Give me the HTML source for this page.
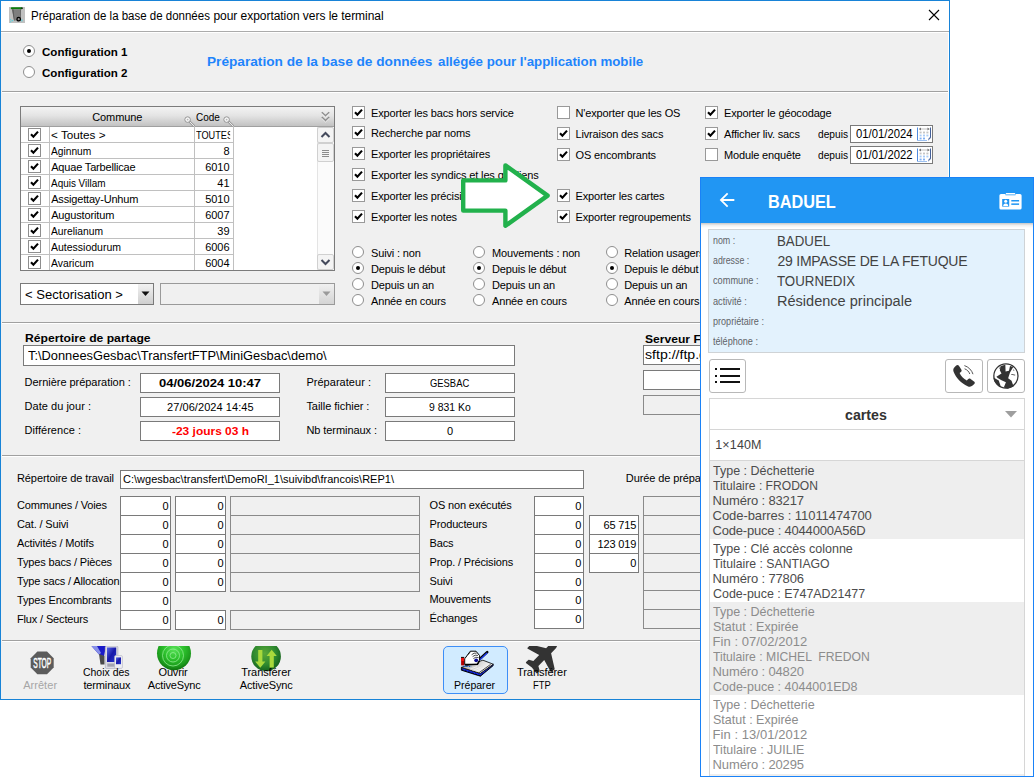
<!DOCTYPE html>
<html><head><meta charset="utf-8"><title>Préparation</title>
<style>
html,body{margin:0;padding:0;background:#fff;}
body{width:1034px;height:777px;position:relative;overflow:hidden;font-family:"Liberation Sans",sans-serif;}
.t{position:absolute;white-space:pre;}
.b{position:absolute;box-sizing:content-box;}
svg{display:block}
</style></head><body>

<div class="b" style="left:0px;top:0px;width:950px;height:700px;background:#f0f0f0;"></div>
<div class="b" style="left:0px;top:0px;width:950px;height:1px;background:#1883d7;"></div>
<div class="b" style="left:0px;top:0px;width:1px;height:700px;background:#1883d7;"></div>
<div class="b" style="left:949px;top:0px;width:1px;height:700px;background:#1883d7;"></div>
<div class="b" style="left:0px;top:699px;width:950px;height:1px;background:#1883d7;"></div>
<div class="b" style="left:1px;top:1px;width:948px;height:30px;background:#fff;"></div>
<div class="b" style="left:1px;top:31px;width:948px;height:1px;background:#ababab;"></div>
<div class="b" style="left:1px;top:32px;width:948px;height:1px;background:#fff;"></div>
<div class="b" style="left:948px;top:33px;width:1px;height:666px;background:#fff;"></div>
<svg class="b" style="left:9px;top:7px" width="16" height="16" viewBox="0 0 16 16">
<rect width="16" height="16" fill="#c0c0c0"/><rect x="1.8" y="0.3" width="11.6" height="1.9" rx="0.8" fill="#0b7d0b"/><rect x="12.4" y="0.5" width="1.3" height="1.4" fill="#111"/>
<path d="M3 2.3 L12 2.3 L11.8 13.6 L5 13.6 Z" fill="#7e7e7e"/><path d="M3 2.3 L4.6 2.3 L5.6 13.6 L5 13.6 Z" fill="#5e5e5e"/><path d="M11.2 2.3 L12 2.3 L11.8 10 L11.2 10 Z" fill="#636363"/>
<circle cx="9.7" cy="12.2" r="1.75" fill="#8a8a8a" stroke="#000" stroke-width="1.3"/>
<rect x="1" y="12.2" width="1.2" height="1" fill="#4fd4e0"/><rect x="2.6" y="13.2" width="1.6" height="1" fill="#4fd4e0"/><rect x="1" y="14.4" width="1.2" height="0.9" fill="#4fd4e0"/><rect x="12.4" y="12.4" width="1" height="2" fill="#4fd4e0"/></svg>
<div class="t " style="left:30.50px;top:6.84px;font-size:12px;line-height:18px;color:#000;transform:scaleX(0.9576);transform-origin:0 0;">Préparation de la base de données</div>
<div class="t " style="left:213.40px;top:6.84px;font-size:12px;line-height:18px;color:#000;letter-spacing:-0.037px;">pour exportation vers le terminal</div>
<svg class="b" style="left:928px;top:9px" width="12" height="12" viewBox="0 0 12 12"><path d="M1 1 L11 11 M11 1 L1 11" stroke="#000" stroke-width="1.1" fill="none"/></svg>
<div class="b" style="left:23px;top:45px;width:10px;height:10px;border-radius:50%;background:#fff;border:1px solid #8e8e8e;"></div>
<div class="b" style="left:27px;top:49px;width:4px;height:4px;border-radius:50%;background:#000;"></div>
<div class="b" style="left:23px;top:66px;width:10px;height:10px;border-radius:50%;background:#fff;border:1px solid #8e8e8e;"></div>
<div class="t " style="left:42.00px;top:43.69px;font-size:11px;line-height:16px;color:#000;font-weight:bold;transform:scaleX(1.0520);transform-origin:0 0;">Configuration 1</div>
<div class="t " style="left:42.00px;top:64.69px;font-size:11px;line-height:16px;color:#000;font-weight:bold;transform:scaleX(1.0520);transform-origin:0 0;">Configuration 2</div>
<div class="t " style="left:207.30px;top:52.00px;font-size:13px;line-height:20px;color:#1e84fc;font-weight:bold;transform:scaleX(1.0505);transform-origin:0 0;">Préparation de la base de données</div>
<div class="t " style="left:437.70px;top:52.00px;font-size:13px;line-height:20px;color:#1e84fc;font-weight:bold;transform:scaleX(1.0208);transform-origin:0 0;">allégée pour l&#x27;application mobile</div>
<div class="b" style="left:2px;top:91px;width:946px;height:1px;background:#a0a0a0;"></div>
<div class="b" style="left:2px;top:92px;width:946px;height:1px;background:#fff;"></div>
<div class="b" style="left:20px;top:106px;width:313px;height:163px;background:#fff;border:1px solid #7b7b7b;"></div>
<div class="b" style="left:21px;top:107px;width:313px;height:19px;background:linear-gradient(#f3f3f3,#e4e4e4 45%,#c2c2c2);"></div>
<div class="b" style="left:21px;top:126px;width:313px;height:1px;background:#a0a0a0;"></div>
<div class="b" style="left:21px;top:142px;width:213px;height:1px;background:#c0c0c0;"></div>
<div class="b" style="left:28px;top:128px;width:11px;height:11px;background:#fff;border:1px solid #8e8e8e;"><svg width="13" height="13" viewBox="0 0 13 13" style="position:absolute;left:-1px;top:-1px"><path d="M3 6.2 L5.4 8.8 L10 3.6" fill="none" stroke="#000" stroke-width="2.1"/></svg></div>
<div class="t " style="left:51.20px;top:127.19px;font-size:11px;line-height:16px;color:#000;transform:scaleX(1.0651);transform-origin:0 0;">&lt; Toutes &gt;</div>
<div class="t " style="left:196.20px;top:127.19px;font-size:11px;line-height:16px;color:#000;transform:scaleX(0.8334);transform-origin:0 0;width:40.56px;overflow:hidden;">TOUTES</div>
<div class="b" style="left:21px;top:158px;width:213px;height:1px;background:#c0c0c0;"></div>
<div class="b" style="left:28px;top:144px;width:11px;height:11px;background:#fff;border:1px solid #8e8e8e;"><svg width="13" height="13" viewBox="0 0 13 13" style="position:absolute;left:-1px;top:-1px"><path d="M3 6.2 L5.4 8.8 L10 3.6" fill="none" stroke="#000" stroke-width="2.1"/></svg></div>
<div class="t " style="left:51.20px;top:143.19px;font-size:11px;line-height:16px;color:#000;transform:scaleX(0.9282);transform-origin:0 0;">Aginnum</div>
<div class="t " style="left:223.38px;top:143.19px;font-size:11px;line-height:16px;color:#000;letter-spacing:-0.100px;">8</div>
<div class="b" style="left:21px;top:174px;width:213px;height:1px;background:#c0c0c0;"></div>
<div class="b" style="left:28px;top:160px;width:11px;height:11px;background:#fff;border:1px solid #8e8e8e;"><svg width="13" height="13" viewBox="0 0 13 13" style="position:absolute;left:-1px;top:-1px"><path d="M3 6.2 L5.4 8.8 L10 3.6" fill="none" stroke="#000" stroke-width="2.1"/></svg></div>
<div class="t " style="left:51.20px;top:159.19px;font-size:11px;line-height:16px;color:#000;letter-spacing:-0.174px;">Aquae Tarbellicae</div>
<div class="t " style="left:205.33px;top:159.19px;font-size:11px;line-height:16px;color:#000;letter-spacing:-0.100px;">6010</div>
<div class="b" style="left:21px;top:190px;width:213px;height:1px;background:#c0c0c0;"></div>
<div class="b" style="left:28px;top:176px;width:11px;height:11px;background:#fff;border:1px solid #8e8e8e;"><svg width="13" height="13" viewBox="0 0 13 13" style="position:absolute;left:-1px;top:-1px"><path d="M3 6.2 L5.4 8.8 L10 3.6" fill="none" stroke="#000" stroke-width="2.1"/></svg></div>
<div class="t " style="left:51.20px;top:175.19px;font-size:11px;line-height:16px;color:#000;transform:scaleX(0.9034);transform-origin:0 0;">Aquis Villam</div>
<div class="t " style="left:217.36px;top:175.19px;font-size:11px;line-height:16px;color:#000;letter-spacing:-0.100px;">41</div>
<div class="b" style="left:21px;top:206px;width:213px;height:1px;background:#c0c0c0;"></div>
<div class="b" style="left:28px;top:192px;width:11px;height:11px;background:#fff;border:1px solid #8e8e8e;"><svg width="13" height="13" viewBox="0 0 13 13" style="position:absolute;left:-1px;top:-1px"><path d="M3 6.2 L5.4 8.8 L10 3.6" fill="none" stroke="#000" stroke-width="2.1"/></svg></div>
<div class="t " style="left:51.20px;top:191.19px;font-size:11px;line-height:16px;color:#000;letter-spacing:-0.179px;">Assigettay-Unhum</div>
<div class="t " style="left:205.33px;top:191.19px;font-size:11px;line-height:16px;color:#000;letter-spacing:-0.100px;">5010</div>
<div class="b" style="left:21px;top:222px;width:213px;height:1px;background:#c0c0c0;"></div>
<div class="b" style="left:28px;top:208px;width:11px;height:11px;background:#fff;border:1px solid #8e8e8e;"><svg width="13" height="13" viewBox="0 0 13 13" style="position:absolute;left:-1px;top:-1px"><path d="M3 6.2 L5.4 8.8 L10 3.6" fill="none" stroke="#000" stroke-width="2.1"/></svg></div>
<div class="t " style="left:51.20px;top:207.19px;font-size:11px;line-height:16px;color:#000;letter-spacing:-0.151px;">Augustoritum</div>
<div class="t " style="left:205.33px;top:207.19px;font-size:11px;line-height:16px;color:#000;letter-spacing:-0.100px;">6007</div>
<div class="b" style="left:21px;top:238px;width:213px;height:1px;background:#c0c0c0;"></div>
<div class="b" style="left:28px;top:224px;width:11px;height:11px;background:#fff;border:1px solid #8e8e8e;"><svg width="13" height="13" viewBox="0 0 13 13" style="position:absolute;left:-1px;top:-1px"><path d="M3 6.2 L5.4 8.8 L10 3.6" fill="none" stroke="#000" stroke-width="2.1"/></svg></div>
<div class="t " style="left:51.20px;top:223.19px;font-size:11px;line-height:16px;color:#000;transform:scaleX(0.9345);transform-origin:0 0;">Aurelianum</div>
<div class="t " style="left:217.36px;top:223.19px;font-size:11px;line-height:16px;color:#000;letter-spacing:-0.100px;">39</div>
<div class="b" style="left:21px;top:254px;width:213px;height:1px;background:#c0c0c0;"></div>
<div class="b" style="left:28px;top:240px;width:11px;height:11px;background:#fff;border:1px solid #8e8e8e;"><svg width="13" height="13" viewBox="0 0 13 13" style="position:absolute;left:-1px;top:-1px"><path d="M3 6.2 L5.4 8.8 L10 3.6" fill="none" stroke="#000" stroke-width="2.1"/></svg></div>
<div class="t " style="left:51.20px;top:239.19px;font-size:11px;line-height:16px;color:#000;transform:scaleX(0.9540);transform-origin:0 0;">Autessiodurum</div>
<div class="t " style="left:205.33px;top:239.19px;font-size:11px;line-height:16px;color:#000;letter-spacing:-0.100px;">6006</div>
<div class="b" style="left:28px;top:256px;width:11px;height:11px;background:#fff;border:1px solid #8e8e8e;"><svg width="13" height="13" viewBox="0 0 13 13" style="position:absolute;left:-1px;top:-1px"><path d="M3 6.2 L5.4 8.8 L10 3.6" fill="none" stroke="#000" stroke-width="2.1"/></svg></div>
<div class="t " style="left:51.20px;top:255.19px;font-size:11px;line-height:16px;color:#000;transform:scaleX(0.9420);transform-origin:0 0;">Avaricum</div>
<div class="t " style="left:205.33px;top:255.19px;font-size:11px;line-height:16px;color:#000;letter-spacing:-0.100px;">6004</div>
<div class="b" style="left:49px;top:127px;width:1px;height:143px;background:#c0c0c0;"></div>
<div class="b" style="left:194px;top:127px;width:1px;height:143px;background:#c0c0c0;"></div>
<div class="b" style="left:233px;top:127px;width:1px;height:143px;background:#c0c0c0;"></div>
<div class="t " style="left:92.23px;top:108.69px;font-size:11px;line-height:16px;color:#000;letter-spacing:-0.100px;">Commune</div>
<div class="t " style="left:195.70px;top:108.69px;font-size:11px;line-height:16px;color:#000;transform:scaleX(0.9088);transform-origin:0 0;">Code</div>
<svg class="b" style="left:184px;top:116px" width="11" height="11" viewBox="0 0 11 11"><path d="M5.6 5.6 L10.2 10.2" stroke="#9c9c9c" stroke-width="2.4" stroke-linecap="round"/><path d="M5.6 5.6 L10.2 10.2" stroke="#ececec" stroke-width="1" stroke-linecap="round"/><circle cx="3.6" cy="3.6" r="2.8" fill="#f6f6f6" stroke="#959595" stroke-width="1"/><circle cx="3.6" cy="3.6" r="0.9" fill="#b4b4b4"/></svg>
<svg class="b" style="left:223px;top:116px" width="11" height="11" viewBox="0 0 11 11"><path d="M5.6 5.6 L10.2 10.2" stroke="#9c9c9c" stroke-width="2.4" stroke-linecap="round"/><path d="M5.6 5.6 L10.2 10.2" stroke="#ececec" stroke-width="1" stroke-linecap="round"/><circle cx="3.6" cy="3.6" r="2.8" fill="#f6f6f6" stroke="#959595" stroke-width="1"/><circle cx="3.6" cy="3.6" r="0.9" fill="#b4b4b4"/></svg>
<svg class="b" style="left:321px;top:111px" width="9" height="12" viewBox="0 0 9 12"><path d="M0.8 1.2 L4.5 4.8 L8.2 1.2 M0.8 6 L4.5 9.6 L8.2 6" stroke="#8c8c8c" stroke-width="1.5" fill="none"/><path d="M0.8 2.6 L4.5 6.2 L8.2 2.6 M0.8 7.4 L4.5 11 L8.2 7.4" stroke="#f4f4f4" stroke-width="0.8" fill="none"/></svg>
<div class="b" style="left:317px;top:127px;width:17px;height:143px;background:#fbfbfb;"></div>
<div class="b" style="left:317px;top:127px;width:1px;height:143px;background:#e4e4e4;"></div>
<div class="b" style="left:317px;top:127px;width:15px;height:14px;background:#f4f4f4;border:1px solid #d0d0d0;border-radius:2px;"></div>
<div class="b" style="left:317px;top:143px;width:15px;height:17px;background:#f4f4f4;border:1px solid #d0d0d0;border-radius:2px;"></div>
<div class="b" style="left:317px;top:254px;width:15px;height:14px;background:#f4f4f4;border:1px solid #d0d0d0;border-radius:2px;"></div>
<svg class="b" style="left:320px;top:131px" width="11" height="8" viewBox="0 0 11 8"><path d="M1.5 6 L5.5 2 L9.5 6" stroke="#444a5c" stroke-width="2" fill="none"/></svg>
<svg class="b" style="left:320px;top:258px" width="11" height="8" viewBox="0 0 11 8"><path d="M1.5 2 L5.5 6 L9.5 2" stroke="#444a5c" stroke-width="2" fill="none"/></svg>
<div class="b" style="left:322px;top:150px;width:7px;height:1px;background:#8c8c8c;"></div>
<div class="b" style="left:322px;top:152px;width:7px;height:1px;background:#8c8c8c;"></div>
<div class="b" style="left:322px;top:154px;width:7px;height:1px;background:#8c8c8c;"></div>
<div class="b" style="left:322px;top:156px;width:7px;height:1px;background:#8c8c8c;"></div>
<div class="b" style="left:20px;top:283px;width:132px;height:20px;background:#fff;border:1px solid #7a7a7a;"></div>
<div class="b" style="left:138px;top:284px;width:15px;height:20px;background:linear-gradient(#f2f2f2,#cfcfcf);"></div>
<svg class="b" style="left:141px;top:291px" width="9" height="6" viewBox="0 0 9 6"><path d="M0.5 0.5 L8.5 0.5 L4.5 5 Z" fill="#111"/></svg>
<div class="t " style="left:25.00px;top:285.84px;font-size:12px;line-height:18px;color:#000;transform:scaleX(1.0882);transform-origin:0 0;">&lt; Sectorisation &gt;</div>
<div class="b" style="left:160px;top:283px;width:173px;height:20px;background:#f0f0f0;border:1px solid #9a9a9a;"></div>
<div class="b" style="left:319px;top:284px;width:15px;height:20px;background:linear-gradient(#f0f0f0,#d4d4d4);"></div>
<svg class="b" style="left:322px;top:291px" width="9" height="6" viewBox="0 0 9 6"><path d="M0.5 0.5 L8.5 0.5 L4.5 5 Z" fill="#9a9a9a"/></svg>
<div class="b" style="left:352px;top:106px;width:11px;height:11px;background:#fff;border:1px solid #999;"><svg width="13" height="13" viewBox="0 0 13 13" style="position:absolute;left:-1px;top:-1px"><path d="M3 6.2 L5.4 8.8 L10 3.6" fill="none" stroke="#000" stroke-width="2.1"/></svg></div>
<div class="t " style="left:371.00px;top:105.19px;font-size:11px;line-height:16px;color:#000;letter-spacing:-0.150px;">Exporter les bacs hors service</div>
<div class="b" style="left:352px;top:126px;width:11px;height:11px;background:#fff;border:1px solid #999;"><svg width="13" height="13" viewBox="0 0 13 13" style="position:absolute;left:-1px;top:-1px"><path d="M3 6.2 L5.4 8.8 L10 3.6" fill="none" stroke="#000" stroke-width="2.1"/></svg></div>
<div class="t " style="left:371.00px;top:125.19px;font-size:11px;line-height:16px;color:#000;letter-spacing:-0.150px;">Recherche par noms</div>
<div class="b" style="left:352px;top:147px;width:11px;height:11px;background:#fff;border:1px solid #999;"><svg width="13" height="13" viewBox="0 0 13 13" style="position:absolute;left:-1px;top:-1px"><path d="M3 6.2 L5.4 8.8 L10 3.6" fill="none" stroke="#000" stroke-width="2.1"/></svg></div>
<div class="t " style="left:371.00px;top:146.19px;font-size:11px;line-height:16px;color:#000;letter-spacing:-0.150px;">Exporter les propriétaires</div>
<div class="b" style="left:352px;top:168px;width:11px;height:11px;background:#fff;border:1px solid #999;"><svg width="13" height="13" viewBox="0 0 13 13" style="position:absolute;left:-1px;top:-1px"><path d="M3 6.2 L5.4 8.8 L10 3.6" fill="none" stroke="#000" stroke-width="2.1"/></svg></div>
<div class="t " style="left:371.00px;top:167.19px;font-size:11px;line-height:16px;color:#000;letter-spacing:-0.150px;">Exporter les syndics et les gardiens</div>
<div class="b" style="left:352px;top:189px;width:11px;height:11px;background:#fff;border:1px solid #999;"><svg width="13" height="13" viewBox="0 0 13 13" style="position:absolute;left:-1px;top:-1px"><path d="M3 6.2 L5.4 8.8 L10 3.6" fill="none" stroke="#000" stroke-width="2.1"/></svg></div>
<div class="t " style="left:371.00px;top:188.19px;font-size:11px;line-height:16px;color:#000;letter-spacing:-0.150px;">Exporter les précisions</div>
<div class="b" style="left:352px;top:210px;width:11px;height:11px;background:#fff;border:1px solid #999;"><svg width="13" height="13" viewBox="0 0 13 13" style="position:absolute;left:-1px;top:-1px"><path d="M3 6.2 L5.4 8.8 L10 3.6" fill="none" stroke="#000" stroke-width="2.1"/></svg></div>
<div class="t " style="left:371.00px;top:209.19px;font-size:11px;line-height:16px;color:#000;letter-spacing:-0.150px;">Exporter les notes</div>
<div class="b" style="left:557px;top:106px;width:11px;height:11px;background:#fff;border:1px solid #999;"></div>
<div class="t " style="left:575.50px;top:105.19px;font-size:11px;line-height:16px;color:#000;letter-spacing:-0.150px;">N&#x27;exporter que les OS</div>
<div class="b" style="left:557px;top:127px;width:11px;height:11px;background:#fff;border:1px solid #999;"><svg width="13" height="13" viewBox="0 0 13 13" style="position:absolute;left:-1px;top:-1px"><path d="M3 6.2 L5.4 8.8 L10 3.6" fill="none" stroke="#000" stroke-width="2.1"/></svg></div>
<div class="t " style="left:575.50px;top:126.19px;font-size:11px;line-height:16px;color:#000;letter-spacing:-0.150px;">Livraison des sacs</div>
<div class="b" style="left:557px;top:148px;width:11px;height:11px;background:#fff;border:1px solid #999;"><svg width="13" height="13" viewBox="0 0 13 13" style="position:absolute;left:-1px;top:-1px"><path d="M3 6.2 L5.4 8.8 L10 3.6" fill="none" stroke="#000" stroke-width="2.1"/></svg></div>
<div class="t " style="left:575.50px;top:147.19px;font-size:11px;line-height:16px;color:#000;letter-spacing:-0.150px;">OS encombrants</div>
<div class="b" style="left:557px;top:189px;width:11px;height:11px;background:#fff;border:1px solid #999;"><svg width="13" height="13" viewBox="0 0 13 13" style="position:absolute;left:-1px;top:-1px"><path d="M3 6.2 L5.4 8.8 L10 3.6" fill="none" stroke="#000" stroke-width="2.1"/></svg></div>
<div class="t " style="left:575.50px;top:188.19px;font-size:11px;line-height:16px;color:#000;letter-spacing:-0.150px;">Exporter les cartes</div>
<div class="b" style="left:557px;top:210px;width:11px;height:11px;background:#fff;border:1px solid #999;"><svg width="13" height="13" viewBox="0 0 13 13" style="position:absolute;left:-1px;top:-1px"><path d="M3 6.2 L5.4 8.8 L10 3.6" fill="none" stroke="#000" stroke-width="2.1"/></svg></div>
<div class="t " style="left:575.50px;top:209.19px;font-size:11px;line-height:16px;color:#000;letter-spacing:-0.150px;">Exporter regroupements</div>
<div class="b" style="left:705px;top:106px;width:11px;height:11px;background:#fff;border:1px solid #999;"><svg width="13" height="13" viewBox="0 0 13 13" style="position:absolute;left:-1px;top:-1px"><path d="M3 6.2 L5.4 8.8 L10 3.6" fill="none" stroke="#000" stroke-width="2.1"/></svg></div>
<div class="t " style="left:724.00px;top:105.19px;font-size:11px;line-height:16px;color:#000;letter-spacing:-0.150px;">Exporter le géocodage</div>
<div class="b" style="left:705px;top:127px;width:11px;height:11px;background:#fff;border:1px solid #999;"><svg width="13" height="13" viewBox="0 0 13 13" style="position:absolute;left:-1px;top:-1px"><path d="M3 6.2 L5.4 8.8 L10 3.6" fill="none" stroke="#000" stroke-width="2.1"/></svg></div>
<div class="t " style="left:724.00px;top:126.19px;font-size:11px;line-height:16px;color:#000;letter-spacing:-0.150px;">Afficher liv. sacs</div>
<div class="b" style="left:705px;top:148px;width:11px;height:11px;background:#fff;border:1px solid #999;"></div>
<div class="t " style="left:724.00px;top:147.19px;font-size:11px;line-height:16px;color:#000;letter-spacing:-0.150px;">Module enquête</div>
<div class="t " style="left:818.00px;top:126.19px;font-size:11px;line-height:16px;color:#000;transform:scaleX(0.9255);transform-origin:0 0;">depuis</div>
<div class="t " style="left:818.00px;top:147.19px;font-size:11px;line-height:16px;color:#000;transform:scaleX(0.9255);transform-origin:0 0;">depuis</div>
<div class="b" style="left:850px;top:125px;width:81px;height:16px;background:#fff;border:1px solid #7a7a7a;"></div>
<div class="b" style="left:850px;top:146px;width:81px;height:16px;background:#fff;border:1px solid #7a7a7a;"></div>
<div class="t " style="left:855.50px;top:125.34px;font-size:12px;line-height:18px;color:#000;transform:scaleX(0.9407);transform-origin:0 0;">01/01/2024</div>
<div class="t " style="left:855.50px;top:146.34px;font-size:12px;line-height:18px;color:#000;transform:scaleX(0.9407);transform-origin:0 0;">01/01/2022</div>
<svg class="b" style="left:917px;top:127px" width="15" height="15" viewBox="0 0 15 15"><path d="M0.5 0.5 V13.5" stroke="#4f8be0" stroke-width="1"/><path d="M0.5 13.5 H10" stroke="#9cc0f0" stroke-width="1"/><path d="M13.9 9 V11 L11 13.8 L11.6 11.4 Z" fill="#5570a8"/><path d="M13.5 0.5 V10.5" stroke="#44609a" stroke-width="1"/><path d="M2 2 H12.5" stroke="#b0b0b0" stroke-width="0.8"/><path d="M2 2 L4 0.6 V3.4 Z M12.5 2 L10.5 0.6 V3.4 Z" fill="#707070"/><g fill="#c4c4c4"><rect x="2.6" y="4.6" width="2" height="1.8"/><rect x="6" y="4.6" width="2" height="1.8"/><rect x="9.4" y="4.6" width="2" height="1.8"/></g><g fill="#a9cbf5"><rect x="2.6" y="7.6" width="2" height="1.8"/><rect x="6" y="7.6" width="2" height="1.8"/><rect x="9.4" y="7.6" width="2" height="1.8"/></g><g fill="#7fb0f5"><rect x="2.6" y="10.6" width="2" height="1.8"/><rect x="6" y="10.6" width="2" height="1.8"/></g></svg>
<svg class="b" style="left:917px;top:148px" width="15" height="15" viewBox="0 0 15 15"><path d="M0.5 0.5 V13.5" stroke="#4f8be0" stroke-width="1"/><path d="M0.5 13.5 H10" stroke="#9cc0f0" stroke-width="1"/><path d="M13.9 9 V11 L11 13.8 L11.6 11.4 Z" fill="#5570a8"/><path d="M13.5 0.5 V10.5" stroke="#44609a" stroke-width="1"/><path d="M2 2 H12.5" stroke="#b0b0b0" stroke-width="0.8"/><path d="M2 2 L4 0.6 V3.4 Z M12.5 2 L10.5 0.6 V3.4 Z" fill="#707070"/><g fill="#c4c4c4"><rect x="2.6" y="4.6" width="2" height="1.8"/><rect x="6" y="4.6" width="2" height="1.8"/><rect x="9.4" y="4.6" width="2" height="1.8"/></g><g fill="#a9cbf5"><rect x="2.6" y="7.6" width="2" height="1.8"/><rect x="6" y="7.6" width="2" height="1.8"/><rect x="9.4" y="7.6" width="2" height="1.8"/></g><g fill="#7fb0f5"><rect x="2.6" y="10.6" width="2" height="1.8"/><rect x="6" y="10.6" width="2" height="1.8"/></g></svg>
<div class="b" style="left:352px;top:246px;width:10px;height:10px;border-radius:50%;background:#fff;border:1px solid #8e8e8e;"></div>
<div class="t " style="left:371.00px;top:245.19px;font-size:11px;line-height:16px;color:#000;letter-spacing:-0.150px;">Suivi : non</div>
<div class="b" style="left:352px;top:262px;width:10px;height:10px;border-radius:50%;background:#fff;border:1px solid #8e8e8e;"></div>
<div class="b" style="left:356px;top:266px;width:4px;height:4px;border-radius:50%;background:#000;"></div>
<div class="t " style="left:371.00px;top:261.19px;font-size:11px;line-height:16px;color:#000;letter-spacing:-0.150px;">Depuis le début</div>
<div class="b" style="left:352px;top:278px;width:10px;height:10px;border-radius:50%;background:#fff;border:1px solid #8e8e8e;"></div>
<div class="t " style="left:371.00px;top:277.19px;font-size:11px;line-height:16px;color:#000;letter-spacing:-0.150px;">Depuis un an</div>
<div class="b" style="left:352px;top:294px;width:10px;height:10px;border-radius:50%;background:#fff;border:1px solid #8e8e8e;"></div>
<div class="t " style="left:371.00px;top:293.19px;font-size:11px;line-height:16px;color:#000;letter-spacing:-0.150px;">Année en cours</div>
<div class="b" style="left:473px;top:246px;width:10px;height:10px;border-radius:50%;background:#fff;border:1px solid #8e8e8e;"></div>
<div class="t " style="left:492.00px;top:245.19px;font-size:11px;line-height:16px;color:#000;letter-spacing:-0.150px;">Mouvements : non</div>
<div class="b" style="left:473px;top:262px;width:10px;height:10px;border-radius:50%;background:#fff;border:1px solid #8e8e8e;"></div>
<div class="b" style="left:477px;top:266px;width:4px;height:4px;border-radius:50%;background:#000;"></div>
<div class="t " style="left:492.00px;top:261.19px;font-size:11px;line-height:16px;color:#000;letter-spacing:-0.150px;">Depuis le début</div>
<div class="b" style="left:473px;top:278px;width:10px;height:10px;border-radius:50%;background:#fff;border:1px solid #8e8e8e;"></div>
<div class="t " style="left:492.00px;top:277.19px;font-size:11px;line-height:16px;color:#000;letter-spacing:-0.150px;">Depuis un an</div>
<div class="b" style="left:473px;top:294px;width:10px;height:10px;border-radius:50%;background:#fff;border:1px solid #8e8e8e;"></div>
<div class="t " style="left:492.00px;top:293.19px;font-size:11px;line-height:16px;color:#000;letter-spacing:-0.150px;">Année en cours</div>
<div class="b" style="left:606px;top:246px;width:10px;height:10px;border-radius:50%;background:#fff;border:1px solid #8e8e8e;"></div>
<div class="t " style="left:624.30px;top:245.19px;font-size:11px;line-height:16px;color:#000;letter-spacing:-0.150px;">Relation usagers</div>
<div class="b" style="left:606px;top:262px;width:10px;height:10px;border-radius:50%;background:#fff;border:1px solid #8e8e8e;"></div>
<div class="b" style="left:610px;top:266px;width:4px;height:4px;border-radius:50%;background:#000;"></div>
<div class="t " style="left:624.30px;top:261.19px;font-size:11px;line-height:16px;color:#000;letter-spacing:-0.150px;">Depuis le début</div>
<div class="b" style="left:606px;top:278px;width:10px;height:10px;border-radius:50%;background:#fff;border:1px solid #8e8e8e;"></div>
<div class="t " style="left:624.30px;top:277.19px;font-size:11px;line-height:16px;color:#000;letter-spacing:-0.150px;">Depuis un an</div>
<div class="b" style="left:606px;top:294px;width:10px;height:10px;border-radius:50%;background:#fff;border:1px solid #8e8e8e;"></div>
<div class="t " style="left:624.30px;top:293.19px;font-size:11px;line-height:16px;color:#000;letter-spacing:-0.150px;">Année en cours</div>
<svg class="b" style="left:455px;top:158px" width="100" height="76" viewBox="455 158 100 76"><path d="M463.2 180.4 L505.4 180.4 L505.4 165.4 L547.6 195.6 L505.4 225.8 L505.4 210.6 L463.2 210.6 Z" fill="#fff" stroke="#22b14c" stroke-width="4.4" stroke-linejoin="round"/></svg>
<div class="b" style="left:2px;top:322px;width:946px;height:1px;background:#a0a0a0;"></div>
<div class="b" style="left:2px;top:323px;width:946px;height:1px;background:#fff;"></div>
<div class="t " style="left:25.40px;top:330.39px;font-size:11px;line-height:16px;color:#000;font-weight:bold;transform:scaleX(1.1046);transform-origin:0 0;">Répertoire de partage</div>
<div class="b" style="left:23px;top:345px;width:490px;height:19px;background:#fff;border:1px solid #7a7a7a;"></div>
<div class="t " style="left:27.70px;top:346.64px;font-size:12px;line-height:18px;color:#000;transform:scaleX(1.0702);transform-origin:0 0;">T:\DonneesGesbac\TransfertFTP\MiniGesbac\demo\</div>
<div class="t " style="left:24.60px;top:374.19px;font-size:11px;line-height:16px;color:#000;letter-spacing:-0.037px;">Dernière préparation :</div>
<div class="t " style="left:24.60px;top:398.19px;font-size:11px;line-height:16px;color:#000;letter-spacing:0.026px;">Date du jour :</div>
<div class="t " style="left:24.60px;top:421.99px;font-size:11px;line-height:16px;color:#000;letter-spacing:0.029px;">Différence :</div>
<div class="b" style="left:140px;top:373px;width:138px;height:18px;background:#fff;border:1px solid #7a7a7a;"></div>
<div class="b" style="left:140px;top:397px;width:138px;height:18px;background:#fff;border:1px solid #7a7a7a;"></div>
<div class="b" style="left:140px;top:421px;width:138px;height:18px;background:#fff;border:1px solid #7a7a7a;"></div>
<div class="t " style="left:159.00px;top:375.19px;font-size:11px;line-height:16px;color:#000;font-weight:bold;transform:scaleX(1.1827);transform-origin:0 0;">04/06/2024 10:47</div>
<div class="t " style="left:167.08px;top:399.19px;font-size:11px;line-height:16px;color:#000;letter-spacing:0.054px;">27/06/2024 14:45</div>
<div class="t " style="left:171.50px;top:423.19px;font-size:11px;line-height:16px;color:#ff0000;font-weight:bold;transform:scaleX(1.0858);transform-origin:0 0;">-23 jours 03 h</div>
<div class="t " style="left:306.40px;top:374.19px;font-size:11px;line-height:16px;color:#000;letter-spacing:0.031px;">Préparateur :</div>
<div class="t " style="left:306.40px;top:398.19px;font-size:11px;line-height:16px;color:#000;letter-spacing:-0.036px;">Taille fichier :</div>
<div class="t " style="left:306.40px;top:421.99px;font-size:11px;line-height:16px;color:#000;letter-spacing:-0.066px;">Nb terminaux :</div>
<div class="b" style="left:385px;top:373px;width:128px;height:18px;background:#fff;border:1px solid #7a7a7a;"></div>
<div class="b" style="left:385px;top:397px;width:128px;height:18px;background:#fff;border:1px solid #7a7a7a;"></div>
<div class="b" style="left:385px;top:421px;width:128px;height:18px;background:#fff;border:1px solid #7a7a7a;"></div>
<div class="t " style="left:430.20px;top:375.19px;font-size:11px;line-height:16px;color:#000;transform:scaleX(0.8550);transform-origin:0 0;">GESBAC</div>
<div class="t " style="left:428.55px;top:399.19px;font-size:11px;line-height:16px;color:#000;transform:scaleX(0.9469);transform-origin:0 0;">9 831 Ko</div>
<div class="t " style="left:446.94px;top:423.19px;font-size:11px;line-height:16px;color:#000;">0</div>
<div class="t " style="left:645.20px;top:330.79px;font-size:11px;line-height:16px;color:#000;font-weight:bold;transform:scaleX(1.1000);transform-origin:0 0;">Serveur FTP</div>
<div class="b" style="left:643px;top:345px;width:298px;height:18px;background:#fff;border:1px solid #7a7a7a;"></div>
<div class="t " style="left:645.40px;top:346.24px;font-size:12px;line-height:18px;color:#000;transform:scaleX(1.1756);transform-origin:0 0;">sftp://ftp.gesbac.fr</div>
<div class="b" style="left:643px;top:370px;width:298px;height:18px;background:#fff;border:1px solid #7a7a7a;"></div>
<div class="b" style="left:643px;top:395px;width:298px;height:18px;background:#f0f0f0;border:1px solid #8a8a8a;"></div>
<div class="b" style="left:2px;top:455px;width:946px;height:1px;background:#a0a0a0;"></div>
<div class="b" style="left:2px;top:456px;width:946px;height:1px;background:#fff;"></div>
<div class="t " style="left:17.00px;top:470.19px;font-size:11px;line-height:16px;color:#000;letter-spacing:-0.100px;">Répertoire de travail</div>
<div class="b" style="left:120px;top:470px;width:462px;height:17px;background:#fff;border:1px solid #7a7a7a;"></div>
<div class="t " style="left:123.00px;top:471.39px;font-size:11px;line-height:16px;color:#000;letter-spacing:0.015px;">C:\wgesbac\transfert\DemoRI_1\suivibd\francois\REP1\</div>
<div class="t " style="left:625.80px;top:470.39px;font-size:11px;line-height:16px;color:#000;letter-spacing:-0.100px;">Durée de préparation</div>
<div class="t " style="left:17.00px;top:497.19px;font-size:11px;line-height:16px;color:#000;letter-spacing:-0.150px;">Communes / Voies</div>
<div class="t " style="left:17.00px;top:516.19px;font-size:11px;line-height:16px;color:#000;letter-spacing:-0.150px;">Cat. / Suivi</div>
<div class="t " style="left:17.00px;top:535.19px;font-size:11px;line-height:16px;color:#000;letter-spacing:-0.150px;">Activités / Motifs</div>
<div class="t " style="left:17.00px;top:554.19px;font-size:11px;line-height:16px;color:#000;letter-spacing:-0.150px;">Types bacs / Pièces</div>
<div class="t " style="left:17.00px;top:573.19px;font-size:11px;line-height:16px;color:#000;letter-spacing:-0.150px;">Type sacs / Allocation</div>
<div class="t " style="left:17.00px;top:592.19px;font-size:11px;line-height:16px;color:#000;letter-spacing:-0.150px;">Types Encombrants</div>
<div class="t " style="left:17.00px;top:611.19px;font-size:11px;line-height:16px;color:#000;letter-spacing:-0.150px;">Flux / Secteurs</div>
<div class="b" style="left:120px;top:496px;width:49px;height:18px;background:#fff;border:1px solid #7a7a7a;"></div>
<div class="t " style="left:162.48px;top:498.19px;font-size:11px;line-height:16px;color:#000;">0</div>
<div class="b" style="left:175px;top:496px;width:49px;height:18px;background:#fff;border:1px solid #7a7a7a;"></div>
<div class="t " style="left:217.48px;top:498.19px;font-size:11px;line-height:16px;color:#000;">0</div>
<div class="b" style="left:230px;top:496px;width:188px;height:18px;background:#f0f0f0;border:1px solid #8a8a8a;"></div>
<div class="b" style="left:120px;top:515px;width:49px;height:18px;background:#fff;border:1px solid #7a7a7a;"></div>
<div class="t " style="left:162.48px;top:517.19px;font-size:11px;line-height:16px;color:#000;">0</div>
<div class="b" style="left:175px;top:515px;width:49px;height:18px;background:#fff;border:1px solid #7a7a7a;"></div>
<div class="t " style="left:217.48px;top:517.19px;font-size:11px;line-height:16px;color:#000;">0</div>
<div class="b" style="left:230px;top:515px;width:188px;height:18px;background:#f0f0f0;border:1px solid #8a8a8a;"></div>
<div class="b" style="left:120px;top:534px;width:49px;height:18px;background:#fff;border:1px solid #7a7a7a;"></div>
<div class="t " style="left:162.48px;top:536.19px;font-size:11px;line-height:16px;color:#000;">0</div>
<div class="b" style="left:175px;top:534px;width:49px;height:18px;background:#fff;border:1px solid #7a7a7a;"></div>
<div class="t " style="left:217.48px;top:536.19px;font-size:11px;line-height:16px;color:#000;">0</div>
<div class="b" style="left:230px;top:534px;width:188px;height:18px;background:#f0f0f0;border:1px solid #8a8a8a;"></div>
<div class="b" style="left:120px;top:553px;width:49px;height:18px;background:#fff;border:1px solid #7a7a7a;"></div>
<div class="t " style="left:162.48px;top:555.19px;font-size:11px;line-height:16px;color:#000;">0</div>
<div class="b" style="left:175px;top:553px;width:49px;height:18px;background:#fff;border:1px solid #7a7a7a;"></div>
<div class="t " style="left:217.48px;top:555.19px;font-size:11px;line-height:16px;color:#000;">0</div>
<div class="b" style="left:230px;top:553px;width:188px;height:18px;background:#f0f0f0;border:1px solid #8a8a8a;"></div>
<div class="b" style="left:120px;top:572px;width:49px;height:18px;background:#fff;border:1px solid #7a7a7a;"></div>
<div class="t " style="left:162.48px;top:574.19px;font-size:11px;line-height:16px;color:#000;">0</div>
<div class="b" style="left:175px;top:572px;width:49px;height:18px;background:#fff;border:1px solid #7a7a7a;"></div>
<div class="t " style="left:217.48px;top:574.19px;font-size:11px;line-height:16px;color:#000;">0</div>
<div class="b" style="left:230px;top:572px;width:188px;height:18px;background:#f0f0f0;border:1px solid #8a8a8a;"></div>
<div class="b" style="left:120px;top:591px;width:49px;height:18px;background:#fff;border:1px solid #7a7a7a;"></div>
<div class="t " style="left:162.48px;top:593.19px;font-size:11px;line-height:16px;color:#000;">0</div>
<div class="b" style="left:120px;top:610px;width:49px;height:18px;background:#fff;border:1px solid #7a7a7a;"></div>
<div class="t " style="left:162.48px;top:612.19px;font-size:11px;line-height:16px;color:#000;">0</div>
<div class="b" style="left:175px;top:610px;width:49px;height:18px;background:#fff;border:1px solid #7a7a7a;"></div>
<div class="t " style="left:217.48px;top:612.19px;font-size:11px;line-height:16px;color:#000;">0</div>
<div class="b" style="left:230px;top:610px;width:188px;height:18px;background:#f0f0f0;border:1px solid #8a8a8a;"></div>
<div class="t " style="left:429.50px;top:497.19px;font-size:11px;line-height:16px;color:#000;letter-spacing:-0.150px;">OS non exécutés</div>
<div class="b" style="left:534px;top:496px;width:48px;height:18px;background:#fff;border:1px solid #7a7a7a;"></div>
<div class="t " style="left:575.28px;top:498.19px;font-size:11px;line-height:16px;color:#000;">0</div>
<div class="b" style="left:643px;top:496px;width:298px;height:18px;background:#f0f0f0;border:1px solid #8a8a8a;"></div>
<div class="t " style="left:429.50px;top:516.19px;font-size:11px;line-height:16px;color:#000;letter-spacing:-0.150px;">Producteurs</div>
<div class="b" style="left:534px;top:515px;width:48px;height:18px;background:#fff;border:1px solid #7a7a7a;"></div>
<div class="t " style="left:575.28px;top:517.19px;font-size:11px;line-height:16px;color:#000;">0</div>
<div class="b" style="left:643px;top:515px;width:298px;height:18px;background:#f0f0f0;border:1px solid #8a8a8a;"></div>
<div class="t " style="left:429.50px;top:535.19px;font-size:11px;line-height:16px;color:#000;letter-spacing:-0.150px;">Bacs</div>
<div class="b" style="left:534px;top:534px;width:48px;height:18px;background:#fff;border:1px solid #7a7a7a;"></div>
<div class="t " style="left:575.28px;top:536.19px;font-size:11px;line-height:16px;color:#000;">0</div>
<div class="b" style="left:643px;top:534px;width:298px;height:18px;background:#f0f0f0;border:1px solid #8a8a8a;"></div>
<div class="t " style="left:429.50px;top:554.19px;font-size:11px;line-height:16px;color:#000;letter-spacing:-0.150px;">Prop. / Précisions</div>
<div class="b" style="left:534px;top:553px;width:48px;height:18px;background:#fff;border:1px solid #7a7a7a;"></div>
<div class="t " style="left:575.28px;top:555.19px;font-size:11px;line-height:16px;color:#000;">0</div>
<div class="b" style="left:643px;top:553px;width:298px;height:18px;background:#f0f0f0;border:1px solid #8a8a8a;"></div>
<div class="t " style="left:429.50px;top:573.19px;font-size:11px;line-height:16px;color:#000;letter-spacing:-0.150px;">Suivi</div>
<div class="b" style="left:534px;top:572px;width:48px;height:17px;background:#fff;border:1px solid #7a7a7a;"></div>
<div class="t " style="left:575.28px;top:574.19px;font-size:11px;line-height:16px;color:#000;">0</div>
<div class="b" style="left:643px;top:572px;width:298px;height:17px;background:#f0f0f0;border:1px solid #8a8a8a;"></div>
<div class="t " style="left:429.50px;top:591.19px;font-size:11px;line-height:16px;color:#000;letter-spacing:-0.150px;">Mouvements</div>
<div class="b" style="left:534px;top:590px;width:48px;height:18px;background:#fff;border:1px solid #7a7a7a;"></div>
<div class="t " style="left:575.28px;top:592.19px;font-size:11px;line-height:16px;color:#000;">0</div>
<div class="b" style="left:643px;top:590px;width:298px;height:18px;background:#f0f0f0;border:1px solid #8a8a8a;"></div>
<div class="t " style="left:429.50px;top:610.19px;font-size:11px;line-height:16px;color:#000;letter-spacing:-0.150px;">Échanges</div>
<div class="b" style="left:534px;top:609px;width:48px;height:18px;background:#fff;border:1px solid #7a7a7a;"></div>
<div class="t " style="left:575.28px;top:611.19px;font-size:11px;line-height:16px;color:#000;">0</div>
<div class="b" style="left:643px;top:609px;width:298px;height:18px;background:#f0f0f0;border:1px solid #8a8a8a;"></div>
<div class="b" style="left:589px;top:515px;width:48px;height:18px;background:#fff;border:1px solid #7a7a7a;"></div>
<div class="t " style="left:603.50px;top:517.19px;font-size:11px;line-height:16px;color:#000;letter-spacing:-0.150px;">65 715</div>
<div class="b" style="left:589px;top:534px;width:48px;height:18px;background:#fff;border:1px solid #7a7a7a;"></div>
<div class="t " style="left:597.54px;top:536.19px;font-size:11px;line-height:16px;color:#000;letter-spacing:-0.150px;">123 019</div>
<div class="b" style="left:589px;top:553px;width:48px;height:18px;background:#fff;border:1px solid #7a7a7a;"></div>
<div class="t " style="left:630.28px;top:555.19px;font-size:11px;line-height:16px;color:#000;letter-spacing:-0.150px;">0</div>
<div class="b" style="left:2px;top:640px;width:946px;height:1px;background:#a0a0a0;"></div>
<div class="b" style="left:2px;top:641px;width:946px;height:1px;background:#fff;"></div>
<svg class="b" style="left:1px;top:646px" width="700" height="40" viewBox="1 646 700 40">
<defs><radialGradient id="g1" cx="50%" cy="38%" r="60%"><stop offset="0" stop-color="#58e058"/><stop offset="0.5" stop-color="#2cc02c"/><stop offset="0.85" stop-color="#1c9a1c"/><stop offset="1" stop-color="#127812"/></radialGradient><radialGradient id="g2" cx="45%" cy="40%" r="62%"><stop offset="0" stop-color="#5aa838"/><stop offset="0.6" stop-color="#2f8a2f"/><stop offset="1" stop-color="#14601c"/></radialGradient><linearGradient id="gs" x1="0" y1="0" x2="1" y2="1"><stop offset="0" stop-color="#5868e8"/><stop offset="0.5" stop-color="#1818a8"/><stop offset="1" stop-color="#2838d0"/></linearGradient><linearGradient id="gp" x1="0" y1="0" x2="1" y2="0.6"><stop offset="0" stop-color="#bdbdbd"/><stop offset="1" stop-color="#f4f4f4"/></linearGradient></defs>
<path d="M37.4 651.6 H47 L53.7 658.2 V667.6 L47 674.2 H37.4 L30.7 667.6 V658.2 Z" fill="#5c5c5c"/>
<text x="42.2" y="668" font-family="Liberation Sans" font-size="14.5" fill="#fff" stroke="#fff" stroke-width="0.5" text-anchor="middle" transform="translate(42.2 0) scale(0.46 1) translate(-42.2 0)" >STOP</text>
<path d="M91.5 646 L106 646 L104 656.5 L99 654.5 Z" fill="#1a1ac8"/><path d="M91.5 646 L97 646 L101 653 L99 654.5 Z" fill="#8890e8"/>
<path d="M99 654 L104.5 656 L104.5 664.5 L100.5 664.5 Z" fill="#4a4a4a"/>
<rect x="105.3" y="646" width="12.6" height="22.5" rx="1.2" fill="#dcdce4" stroke="#a8a8b4" stroke-width="0.6"/><rect x="107" y="647.5" width="9.2" height="14.5" fill="url(#gs)"/><rect x="107.3" y="663.5" width="8.6" height="3.2" fill="#a4a4b0"/>
<rect x="114.6" y="655.6" width="7.8" height="12.8" rx="1.2" fill="#eeeef4" stroke="#b0b0bc" stroke-width="0.6"/><rect x="116" y="657.4" width="5" height="6.8" fill="url(#gs)"/>
<circle cx="174" cy="653.3" r="17" fill="url(#g1)"/><circle cx="173" cy="655.5" r="10.5" fill="none" stroke="#9af09a" stroke-width="0.9" opacity="0.8"/><circle cx="173" cy="655.5" r="6.5" fill="none" stroke="#9af09a" stroke-width="0.9" opacity="0.8"/><circle cx="173" cy="655.5" r="3" fill="none" stroke="#9af09a" stroke-width="0.9" opacity="0.8"/>
<circle cx="266.1" cy="656.4" r="14.8" fill="url(#g2)"/>
<path d="M258.2 650 h4.2 v11.5 h3 l-5.1 6.2 l-5.1 -6.2 h3 Z" fill="#a9d93c"/><path d="M269.6 667.5 h4.2 v-11.5 h3 l-5.1 -6.2 l-5.1 6.2 h3 Z" fill="#a9d93c"/>
<g transform="translate(521.6 638.8) scale(0.0225)"><path d="M1568 160q44 52 12 148t-108 172l-161 161 160 696q5 19-12 33l-128 96q-7 6-19 6-4 0-7-1-15-3-21-16l-279-508-259 259 53 194q5 17-8 31l-96 96q-9 9-23 9h-2q-15-2-24-13l-189-252-252-189q-11-7-13-23-1-13 9-25l96-97q9-9 23-9 6 0 8 1l194 53 259-259-508-279q-14-8-17-24-2-16 9-27l128-128q14-13 30-8l665 159 160-160q76-76 172-108t148 12z" fill="#333"/></g>
</svg>
<div class="t " style="left:23.13px;top:676.99px;font-size:11px;line-height:16px;color:#a6a6a6;letter-spacing:0.054px;">Arrêter</div>
<div class="t " style="left:82.85px;top:663.89px;font-size:11px;line-height:16px;color:#000;transform:scaleX(0.9506);transform-origin:0 0;">Choix des</div>
<div class="t " style="left:83.47px;top:676.99px;font-size:11px;line-height:16px;color:#000;letter-spacing:-0.155px;">terminaux</div>
<div class="t " style="left:158.48px;top:663.99px;font-size:11px;line-height:16px;color:#000;letter-spacing:-0.141px;">Ouvrir</div>
<div class="t " style="left:147.86px;top:676.99px;font-size:11px;line-height:16px;color:#000;letter-spacing:-0.171px;">ActiveSync</div>
<div class="t " style="left:241.31px;top:663.99px;font-size:11px;line-height:16px;color:#000;letter-spacing:-0.083px;">Transférer</div>
<div class="t " style="left:239.77px;top:676.99px;font-size:11px;line-height:16px;color:#000;letter-spacing:-0.151px;">ActiveSync</div>
<div class="b" style="left:443px;top:646px;width:63px;height:46px;background:#d1ebff;border:1px solid #3d8ef7;border-radius:5px;"></div>
<svg class="b" style="left:458px;top:648px" width="38" height="30" viewBox="458 648 38 30"><defs><linearGradient id="gp2" x1="0" y1="0" x2="1" y2="0.4"><stop offset="0" stop-color="#a8a8a8"/><stop offset="0.55" stop-color="#d4d4d4"/><stop offset="1" stop-color="#ffffff"/></linearGradient></defs><path d="M461.4 667.4 L480.4 673.4 L493.2 664.2 L493.2 665.6 L480.4 676.2 L461.4 670.2 Z" fill="#1428e0" stroke="#000" stroke-width="0.9" stroke-linejoin="round"/><path d="M461.4 669.6 L480.4 675.8" stroke="#000" stroke-width="0.9" stroke-dasharray="2.2 1.4"/><path d="M480.6 675.6 L493 665.2" stroke="#000" stroke-width="0.8" stroke-dasharray="1 1"/><path d="M461.4 667.4 L482.9 660.2 L493.2 664.2 L480.4 673.4 Z" fill="url(#gp2)" stroke="#000" stroke-width="0.8" stroke-linejoin="round"/><path d="M479.2 672.6 L490.6 664.4" stroke="#222" stroke-width="0.8"/><path d="M470 669.2 L477 666.6 M472.5 670.4 L480.5 667.4 M475.8 671.2 L483 668.4" stroke="#f8f8f8" stroke-width="0.7"/><path d="M480.4 658.4 L487.2 652.1" stroke="#000" stroke-width="2.6" stroke-linecap="round"/><path d="M480.4 659.2 L486.8 653.2" stroke="#1a3cec" stroke-width="1.4" stroke-linecap="round"/><path d="M464.7 658.8 L470.3 651.2 L476 651.2 L479.6 655.6 L479.6 660.4 L477.4 664.3 L464.7 664.7 Z" fill="#fff" stroke="#000" stroke-width="1" stroke-linejoin="round"/><path d="M465 664.6 L477.4 664.3 L479.4 660.8" stroke="#000" stroke-width="1.6" fill="none"/><path d="M469.4 653.2 L470.6 652 M468.2 654.6 L469.2 653.6" stroke="#000" stroke-width="0.7"/><path d="M471.6 654.8 Q474 652.4 476.6 653.2 M472.6 656.6 Q475 654.4 478 655.4 M473.4 658.6 Q475.6 656.4 478.6 657.6" stroke="#000" stroke-width="0.7" fill="none"/><circle cx="476.2" cy="660.3" r="1.9" fill="#0a0a90"/><rect x="461.1" y="657.4" width="3" height="8" fill="#b00000"/><rect x="461.1" y="657.4" width="3" height="3.6" fill="#ee1010"/><rect x="461" y="656.9" width="3.2" height="0.9" fill="#000"/><path d="M463.5 666.3 h8" stroke="#1a60c8" stroke-width="1.2" stroke-dasharray="1.6 1"/></svg>
<div class="t " style="left:453.60px;top:676.59px;font-size:11px;line-height:16px;color:#000;transform:scaleX(0.9580);transform-origin:0 0;">Préparer</div>
<div class="t " style="left:516.97px;top:664.09px;font-size:11px;line-height:16px;color:#000;letter-spacing:-0.053px;">Transférer</div>
<div class="t " style="left:532.50px;top:676.79px;font-size:11px;line-height:16px;color:#000;transform:scaleX(0.8567);transform-origin:0 0;">FTP</div>
<div class="b" style="left:700px;top:177px;width:334px;height:600px;background:#fff;"></div>
<div class="b" style="left:701px;top:178px;width:332px;height:45px;background:#2196f3;"></div>
<div class="b" style="left:701px;top:223px;width:332px;height:5px;background:linear-gradient(rgba(0,0,0,.22),rgba(0,0,0,.06) 50%,rgba(0,0,0,0));"></div>
<svg class="b" style="left:716px;top:189px" width="22" height="22" viewBox="0 0 24 24"><path d="M20 11H7.83l5.59-5.59L12 4l-8 8 8 8 1.41-1.41L7.83 13H20v-2z" fill="#fff"/></svg>
<div class="t " style="left:768.00px;top:187.59px;font-size:18.5px;line-height:28px;color:#fff;font-weight:bold;transform:scaleX(0.8796);transform-origin:0 0;">BADUEL</div>
<svg class="b" style="left:999px;top:192.5px" width="23" height="17" viewBox="0 0 23 17"><path d="M2 1 H6.5 V2.3 H16.5 V1 H21 Q22.6 1 22.6 2.6 V15 Q22.6 16.6 21 16.6 H2 Q0.4 16.6 0.4 15 V2.6 Q0.4 1 2 1 Z" fill="#fff"/><rect x="6.8" y="0" width="9.4" height="1.4" rx="0.5" fill="#fff"/><rect x="3.2" y="6" width="7" height="7.6" fill="#2196f3"/><circle cx="6.7" cy="8.3" r="1.5" fill="#fff"/><path d="M4.2 13 Q4.2 10.4 6.7 10.4 Q9.2 10.4 9.2 13 Z" fill="#fff"/><rect x="12.3" y="7" width="7.8" height="1.5" fill="#2196f3"/><rect x="12.3" y="10.4" width="7.8" height="1.5" fill="#2196f3"/></svg>
<div class="b" style="left:708px;top:229px;width:315px;height:122px;background:#e3f2fd;border:1px solid #cfd3d6;"></div>
<div class="t " style="left:712.60px;top:232.84px;font-size:10px;line-height:15px;color:#5f6368;transform:scaleX(0.8876);transform-origin:0 0;">nom :</div>
<div class="t " style="left:712.60px;top:253.09px;font-size:10px;line-height:15px;color:#5f6368;transform:scaleX(0.8801);transform-origin:0 0;">adresse :</div>
<div class="t " style="left:712.60px;top:273.34px;font-size:10px;line-height:15px;color:#5f6368;transform:scaleX(0.9199);transform-origin:0 0;">commune :</div>
<div class="t " style="left:712.60px;top:293.59px;font-size:10px;line-height:15px;color:#5f6368;transform:scaleX(0.9215);transform-origin:0 0;">activité :</div>
<div class="t " style="left:712.60px;top:313.84px;font-size:10px;line-height:15px;color:#5f6368;transform:scaleX(0.9067);transform-origin:0 0;">propriétaire :</div>
<div class="t " style="left:712.60px;top:334.09px;font-size:10px;line-height:15px;color:#5f6368;transform:scaleX(0.9073);transform-origin:0 0;">téléphone :</div>
<div class="t " style="left:777.40px;top:230.55px;font-size:14px;line-height:21px;color:#424242;transform:scaleX(0.9496);transform-origin:0 0;">BADUEL</div>
<div class="t " style="left:777.40px;top:250.82px;font-size:14px;line-height:21px;color:#424242;letter-spacing:-0.210px;">29 IMPASSE DE LA FETUQUE</div>
<div class="t " style="left:777.40px;top:271.09px;font-size:14px;line-height:21px;color:#424242;transform:scaleX(0.9489);transform-origin:0 0;">TOURNEDIX</div>
<div class="t " style="left:777.40px;top:291.36px;font-size:14px;line-height:21px;color:#424242;transform:scaleX(1.0387);transform-origin:0 0;">Résidence principale</div>
<div class="b" style="left:709px;top:359px;width:35px;height:32px;background:#fff;border:1px solid #b8b8b8;border-radius:3px;"></div>
<div class="b" style="left:720px;top:368.3px;width:19.5px;height:2px;background:#111;"></div>
<div class="b" style="left:715px;top:368.3px;width:2px;height:2px;background:#111;"></div>
<div class="b" style="left:720px;top:374.7px;width:19.5px;height:2px;background:#111;"></div>
<div class="b" style="left:715px;top:374.7px;width:2px;height:2px;background:#111;"></div>
<div class="b" style="left:720px;top:381.2px;width:19.5px;height:2px;background:#111;"></div>
<div class="b" style="left:715px;top:381.2px;width:2px;height:2px;background:#111;"></div>
<div class="b" style="left:945px;top:359px;width:36px;height:32px;background:#fff;border:1px solid #b8b8b8;border-radius:3px;"></div>
<div class="b" style="left:987px;top:359px;width:36px;height:32px;background:#fff;border:1px solid #b8b8b8;border-radius:3px;"></div>
<svg class="b" style="left:951px;top:363px" width="26" height="26" viewBox="0 0 26 26"><path d="M5.2 2.6 C6.2 1.6 7.2 1.8 7.9 2.8 L10.3 6.4 C10.9 7.4 10.7 8.2 9.9 8.9 L8.6 10 C9.9 13 12.6 15.9 15.8 17.6 L17 16.3 C17.8 15.5 18.7 15.4 19.6 16 L23 18.4 C24 19.1 24.1 20.1 23.2 21 L21.6 22.6 C20.3 23.9 18.4 24 16.6 23.2 C10.2 20.4 5 15 2.6 8.8 C2 7.2 2.2 5.5 3.5 4.3 Z" fill="#333"/><path d="M13.4 2.6 C17.4 3.8 20.8 7.2 22 11.2" stroke="#555" stroke-width="1" fill="none"/><path d="M13.6 5.8 C16 6.6 18 8.6 18.8 11" stroke="#555" stroke-width="1" fill="none"/></svg>
<svg class="b" style="left:993.06px;top:362.8px" width="25.87" height="25.87" viewBox="600 76 304 304"><circle cx="752" cy="228" r="142" fill="#fff" stroke="#333" stroke-width="15"/><path d="M690 112 L745 98 L748 176 L788 166 L800 110 L838 122 L815 160 L800 188 L778 255 L818 285 L842 352 L770 380 L728 362 L752 302 L700 280 L655 252 L640 238 L700 200 L680 160 Z" fill="#333"/><path d="M606 245 L668 282 L692 356 L648 332 L618 292 Z" fill="#333"/><path d="M815 204 L862 214 L860 223 L815 214 Z M836 148 L852 164 L844 170 Z M672 135 l14 -8 l5 9 l-14 8 Z" fill="#333"/></svg>
<div class="b" style="left:709px;top:398px;width:314px;height:378px;background:#fff;border:1px solid #d6d6d6;"></div>
<div class="b" style="left:710px;top:429px;width:314px;height:1px;background:#d6d6d6;"></div>
<div class="b" style="left:710px;top:460px;width:314px;height:1px;background:#d6d6d6;"></div>
<div class="t " style="left:845.20px;top:403.68px;font-size:14.5px;line-height:22px;color:#333;font-weight:bold;transform:scaleX(0.9782);transform-origin:0 0;">cartes</div>
<svg class="b" style="left:1005px;top:411px" width="12" height="7" viewBox="0 0 12 7"><path d="M0 0 H12 L6 6.4 Z" fill="#9e9e9e"/></svg>
<div class="t " style="left:715.20px;top:436.47px;font-size:12.5px;line-height:19px;color:#424242;letter-spacing:0.163px;">1×140M</div>
<div class="b" style="left:710px;top:461px;width:314px;height:78px;background:#eeeeee;"></div>
<div class="t " style="left:712.60px;top:461.10px;font-size:13px;line-height:20px;color:#4c4c4c;transform:scaleX(0.9621);transform-origin:0 0;">Type : Déchetterie</div>
<div class="t " style="left:712.60px;top:476.10px;font-size:13px;line-height:20px;color:#4c4c4c;transform:scaleX(0.9299);transform-origin:0 0;">Titulaire : FRODON</div>
<div class="t " style="left:712.60px;top:491.10px;font-size:13px;line-height:20px;color:#4c4c4c;letter-spacing:-0.137px;">Numéro : 83217</div>
<div class="t " style="left:712.60px;top:506.10px;font-size:13px;line-height:20px;color:#4c4c4c;letter-spacing:-0.060px;">Code-barres : 11011474700</div>
<div class="t " style="left:712.60px;top:521.10px;font-size:13px;line-height:20px;color:#4c4c4c;letter-spacing:-0.207px;">Code-puce : 4044000A56D</div>
<div class="b" style="left:710px;top:539px;width:314px;height:63px;background:#fff;"></div>
<div class="t " style="left:712.60px;top:539.10px;font-size:13px;line-height:20px;color:#4c4c4c;transform:scaleX(0.9625);transform-origin:0 0;">Type : Clé accès colonne</div>
<div class="t " style="left:712.60px;top:554.10px;font-size:13px;line-height:20px;color:#4c4c4c;transform:scaleX(0.9421);transform-origin:0 0;">Titulaire : SANTIAGO</div>
<div class="t " style="left:712.60px;top:569.10px;font-size:13px;line-height:20px;color:#4c4c4c;letter-spacing:-0.137px;">Numéro : 77806</div>
<div class="t " style="left:712.60px;top:584.10px;font-size:13px;line-height:20px;color:#4c4c4c;transform:scaleX(0.9572);transform-origin:0 0;">Code-puce : E747AD21477</div>
<div class="b" style="left:710px;top:602px;width:314px;height:93px;background:#eeeeee;"></div>
<div class="t " style="left:712.60px;top:602.10px;font-size:13px;line-height:20px;color:#8c8c8c;transform:scaleX(0.9630);transform-origin:0 0;">Type : Déchetterie</div>
<div class="t " style="left:712.60px;top:617.03px;font-size:13px;line-height:20px;color:#8c8c8c;transform:scaleX(0.9620);transform-origin:0 0;">Statut : Expirée</div>
<div class="t " style="left:712.60px;top:631.96px;font-size:13px;line-height:20px;color:#8c8c8c;letter-spacing:0.053px;">Fin : 07/02/2012</div>
<div class="t " style="left:712.60px;top:646.89px;font-size:13px;line-height:20px;color:#8c8c8c;transform:scaleX(0.9364);transform-origin:0 0;">Titulaire : MICHEL  FREDON</div>
<div class="t " style="left:712.60px;top:661.82px;font-size:13px;line-height:20px;color:#8c8c8c;letter-spacing:-0.137px;">Numéro : 04820</div>
<div class="t " style="left:712.60px;top:676.75px;font-size:13px;line-height:20px;color:#8c8c8c;transform:scaleX(0.9612);transform-origin:0 0;">Code-puce : 4044001ED8</div>
<div class="b" style="left:710px;top:695px;width:314px;height:79px;background:#fff;"></div>
<div class="t " style="left:712.60px;top:695.10px;font-size:13px;line-height:20px;color:#8c8c8c;transform:scaleX(0.9630);transform-origin:0 0;">Type : Déchetterie</div>
<div class="t " style="left:712.60px;top:710.03px;font-size:13px;line-height:20px;color:#8c8c8c;transform:scaleX(0.9620);transform-origin:0 0;">Statut : Expirée</div>
<div class="t " style="left:712.60px;top:724.96px;font-size:13px;line-height:20px;color:#8c8c8c;letter-spacing:0.053px;">Fin : 13/01/2012</div>
<div class="t " style="left:712.60px;top:739.89px;font-size:13px;line-height:20px;color:#8c8c8c;transform:scaleX(0.9550);transform-origin:0 0;">Titulaire : JUILIE</div>
<div class="t " style="left:712.60px;top:754.82px;font-size:13px;line-height:20px;color:#8c8c8c;letter-spacing:-0.137px;">Numéro : 20295</div>
<div class="b" style="left:710px;top:774px;width:314px;height:2px;background:#eeeeee;"></div>
<div class="b" style="left:700px;top:177px;width:334px;height:1px;background:#1a82f7;"></div>
<div class="b" style="left:700px;top:177px;width:1px;height:600px;background:#1a82f7;"></div>
<div class="b" style="left:1033px;top:177px;width:1px;height:600px;background:#1a82f7;"></div>
<div class="b" style="left:700px;top:776px;width:334px;height:1px;background:#1a82f7;"></div>
</body></html>
